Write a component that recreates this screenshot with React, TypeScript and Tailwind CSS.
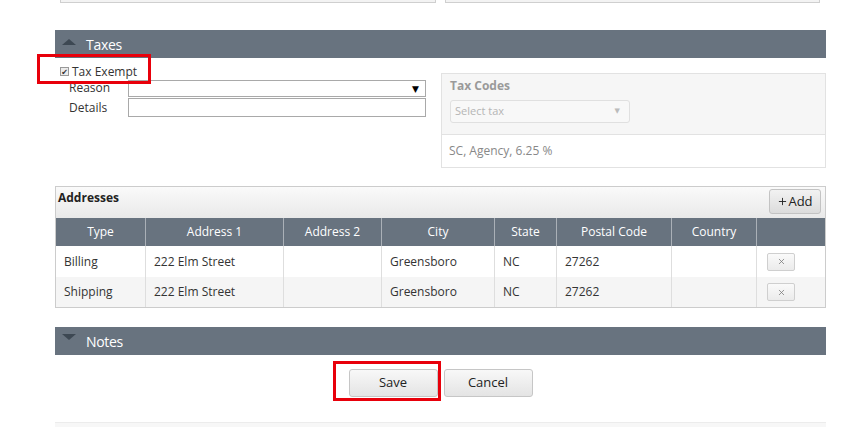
import { X, Plus } from "lucide-react";

const font = { fontFamily: '"Open Sans", "DejaVu Sans", sans-serif' };

const columns = [
  { label: "Type", w: "w-[90px]" },
  { label: "Address 1", w: "w-[138px]" },
  { label: "Address 2", w: "w-[98px]" },
  { label: "City", w: "w-[113px]" },
  { label: "State", w: "w-[62px]" },
  { label: "Postal Code", w: "w-[115px]" },
  { label: "Country", w: "w-[85px]" },
  { label: "", w: "flex-1" },
];

const rows = [
  ["Billing", "222 Elm Street", "", "Greensboro", "NC", "27262", ""],
  ["Shipping", "222 Elm Street", "", "Greensboro", "NC", "27262", ""],
];

function SectionHeader({ title, open }: { title: string; open: boolean }) {
  return (
    <div className="h-[28px] bg-[#68737f] flex items-center pl-[7px] gap-[10px]">
      <span
        className={
          open
            ? "w-0 h-0 border-l-[7px] border-r-[7px] border-b-[6px] border-l-transparent border-r-transparent border-b-[#3d4853] -mt-[5px]"
            : "w-0 h-0 border-l-[7px] border-r-[7px] border-t-[6px] border-l-transparent border-r-transparent border-t-[#3d4853] -mt-[8px]"
        }
      />
      <span className="text-white text-[14px] tracking-[-0.3px]">{title}</span>
    </div>
  );
}

export default function App() {
  return (
    <div className="relative w-[844px] h-[427px] bg-white overflow-hidden text-[#333]" style={font}>
      <div className="pl-[55px] w-[826px]">
        {/* previous section remnants */}
        <div className="flex gap-[9px] pl-[5px] pr-[6px] h-[3px]">
          <div className="w-[376px] h-[3px] border border-t-0 border-[#cfcfcf] bg-[#f3f3f3]" />
          <div className="flex-1 h-[3px] border border-t-0 border-[#cfcfcf] bg-[#f3f3f3]" />
        </div>

        <div className="h-[27px]" />
        <SectionHeader title="Taxes" open />

        {/* taxes body */}
        <div className="flex justify-between h-[109px]">
          <div className="w-[371px] pt-[6px] pl-[5px]">
            <label className="flex items-center gap-[3px] h-[15px] text-[12px] text-[#333]">
              <span className="w-[9px] h-[9px] border border-[#999] bg-[#ececec] flex items-center justify-center text-[8px] leading-none text-[#333]">✔</span>
              Tax Exempt
            </label>
            <div className="flex items-center h-[18px]">
              <span className="w-[68px] pl-[9px] text-[12px] text-[#333]">Reason</span>
              <div className="w-[298px] h-[17px] border border-[#a9a9a9] flex items-center justify-end pr-[6px]">
                <span className="text-[9px] leading-none text-black">▼</span>
              </div>
            </div>
            <div className="flex items-center h-[19px] mt-[1px]">
              <span className="w-[68px] pl-[9px] text-[12px] text-[#333]">Details</span>
              <div className="w-[298px] h-[19px] border border-[#a9a9a9]" />
            </div>
          </div>

          <div className="w-[385px] h-[95px] mt-[15px] border border-[#e2e2e2] flex flex-col">
            <div className="bg-[#f6f6f6] h-[61px] border-b border-[#e2e2e2] pl-[8px] pt-[3px]">
              <div className="text-[12px] font-bold text-[#9a9a9a]">Tax Codes</div>
              <div className="mt-[5px] w-[180px] h-[23px] border border-[#e0e0e0] rounded-[3px] bg-[#f8f8f8] flex items-center justify-between pl-[4px] pr-[9px]">
                <span className="text-[11px] text-[#b5b5b5]">Select tax</span>
                <span className="text-[7px] text-[#bbb]">▼</span>
              </div>
            </div>
            <div className="flex-1 flex items-center pl-[7px] text-[12px] text-[#888]">SC, Agency, 6.25 %</div>
          </div>
        </div>

        <div className="h-[19px]" />

        {/* addresses */}
        <div className="border border-[#cccccc]">
          <div className="h-[31px] bg-gradient-to-b from-[#fafafa] to-[#e9e9e9] flex items-start justify-between pl-[2px] pr-[4px]">
            <span className="text-[12px] font-bold text-[#222] mt-[2px]">Addresses</span>
            <button className="mt-[2px] w-[52px] h-[25px] border border-[#c3c3c3] rounded-[3px] bg-gradient-to-b from-[#f2f2f2] to-[#dcdcdc] flex items-center justify-center text-[13px] text-[#222]">
              <Plus className="w-[11px] h-[11px]" strokeWidth={2} />
              Add
            </button>
          </div>
          <div className="flex h-[28px] bg-[#68737f]">
            {columns.map((c, i) => (
              <div
                key={i}
                className={`${c.w} flex items-center justify-center text-[12px] text-white ${i < columns.length - 1 ? "border-r border-[#aab0b7]" : ""}`}
              >
                {c.label}
              </div>
            ))}
          </div>
          {rows.map((r, ri) => (
            <div key={ri} className={`flex ${ri === 1 ? "bg-[#f5f5f5] h-[30px]" : "bg-white h-[31px]"}`}>
              {r.map((cell, ci) => (
                <div
                  key={ci}
                  className={`${columns[ci].w} flex items-center pl-[8px] text-[12px] text-[#333] border-r border-[#dedede]`}
                >
                  {cell}
                </div>
              ))}
              <div className="flex-1 flex items-center pl-[10px]">
                <button className="w-[28px] h-[18px] border border-[#cfcfcf] rounded-[2px] bg-gradient-to-b from-[#fafafa] to-[#ebebeb] flex items-center justify-center">
                  <X className="w-[9px] h-[9px] text-[#777]" strokeWidth={2} />
                </button>
              </div>
            </div>
          ))}
        </div>

        <div className="h-[19px]" />
        <SectionHeader title="Notes" open={false} />

        <div className="flex justify-center gap-[6px] mt-[14px]">
          <button className="w-[89px] h-[28px] border border-[#c6c6c6] rounded-[3px] bg-gradient-to-b from-[#f8f8f8] to-[#e4e4e4] text-[13px] text-[#222]">Save</button>
          <button className="w-[89px] h-[28px] border border-[#c6c6c6] rounded-[3px] bg-gradient-to-b from-[#f8f8f8] to-[#e4e4e4] text-[13px] text-[#222]">Cancel</button>
        </div>

        <div className="mt-[25px] h-[10px] border-t border-[#ececec] bg-[#f7f7f7]" />
      </div>

      {/* annotation highlights */}
      <div className="absolute left-[37px] top-[54px] w-[114px] h-[30px] border-[3px] border-[#e8000b]" />
      <div className="absolute left-[333px] top-[361px] w-[108px] h-[40px] border-[3px] border-[#e8000b]" />
    </div>
  );
}
